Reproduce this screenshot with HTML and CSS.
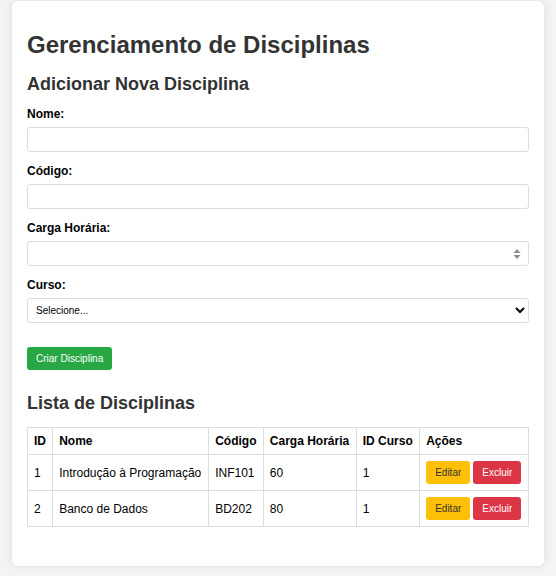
FILE: index.html
```html
<!DOCTYPE html>
<html lang="pt-BR">
<head>
<meta charset="utf-8">
<title>Gerenciamento de Disciplinas</title>
<link rel="stylesheet" href="styles.css">
</head>
<body>
<div class="container">
  <h1 class="title">Gerenciamento de Disciplinas</h1>
  <h2 class="section-title">Adicionar Nova Disciplina</h2>
  <form class="form">
    <div class="form-group">
      <label class="label" for="nome">Nome:</label>
      <input class="field" id="nome" type="text">
    </div>
    <div class="form-group">
      <label class="label" for="codigo">Código:</label>
      <input class="field" id="codigo" type="text">
    </div>
    <div class="form-group">
      <label class="label" for="carga">Carga Horária:</label>
      <div class="number-wrap">
        <input class="field" id="carga" type="text">
        <svg class="spinner" width="8" height="12" viewBox="0 0 8 12"><path d="M4 1 L7.5 5 H0.5 Z M0.5 7 H7.5 L4 11 Z" fill="#8a8a8a"/></svg>
      </div>
    </div>
    <div class="form-group">
      <label class="label" for="curso">Curso:</label>
      <select class="field select" id="curso">
        <option>Selecione...</option>
      </select>
    </div>
    <button type="button" class="btn btn-success">Criar Disciplina</button>
  </form>
  <h2 class="section-title list-title">Lista de Disciplinas</h2>
  <table class="table">
    <thead>
      <tr><th>ID</th><th>Nome</th><th>Código</th><th>Carga Horária</th><th>ID Curso</th><th>Ações</th></tr>
    </thead>
    <tbody>
      <tr>
        <td>1</td><td>Introdução à Programação</td><td>INF101</td><td>60</td><td>1</td>
        <td><div class="actions"><button type="button" class="btn btn-warning">Editar</button><button type="button" class="btn btn-danger">Excluir</button></div></td>
      </tr>
      <tr>
        <td>2</td><td>Banco de Dados</td><td>BD202</td><td>80</td><td>1</td>
        <td><div class="actions"><button type="button" class="btn btn-warning">Editar</button><button type="button" class="btn btn-danger">Excluir</button></div></td>
      </tr>
    </tbody>
  </table>
</div>
</body>
</html>
```
FILE: styles.css
```css
html, body {
  margin: 0;
}
body {
  background: #f4f4f4;
  font-family: "Liberation Sans", Arial, sans-serif;
  padding: 1px 12px 11px;
}
.container {
  background: #fff;
  border-radius: 6px;
  box-shadow: 0 0 8px rgba(0, 0, 0, 0.1);
  padding: 15px 15px 39px;
}
.title {
  margin: 15px 0 15px;
  font-size: 24px;
  line-height: 28px;
  color: #333;
  font-weight: bold;
}
.section-title {
  margin: 0 0 12px;
  font-size: 18px;
  line-height: 21px;
  color: #333;
  font-weight: bold;
}
.list-title {
  margin: 23px 0 13px;
}
.form {
  margin: 0;
}
.form-group {
  margin-bottom: 12px;
}
.label {
  display: block;
  font-size: 12px;
  line-height: 14px;
  font-weight: bold;
  color: #000;
  margin-bottom: 6px;
}
.field {
  display: block;
  box-sizing: border-box;
  width: 100%;
  height: 25px;
  margin: 0;
  padding: 0 6px;
  border: 1px solid #ddd;
  border-radius: 3px;
  font-family: "Liberation Sans", Arial, sans-serif;
  font-size: 10px;
  background: #fff;
  color: #000;
}
.number-wrap {
  position: relative;
}
.spinner {
  position: absolute;
  right: 8px;
  top: 7px;
}
.select {
  padding: 0 4px;
}
.btn {
  font-family: "Liberation Sans", Arial, sans-serif;
  font-size: 10px;
  line-height: 11px;
  padding: 6px 9px;
  border: none;
  border-radius: 3px;
  cursor: pointer;
}
.btn-success {
  display: block;
  margin-top: 24px;
  background: #28a745;
  color: #fff;
}
.btn-warning {
  background: #ffc107;
  color: #333;
}
.btn-danger {
  background: #dc3545;
  color: #fff;
}
.actions {
  display: flex;
  gap: 3px;
}
.table {
  width: 100%;
  border-collapse: collapse;
  font-size: 12px;
  color: #000;
}
.table th, .table td {
  border: 1px solid #ddd;
  padding: 6px;
  text-align: left;
  line-height: 14px;
}
.table th {
  font-weight: bold;
}
```
